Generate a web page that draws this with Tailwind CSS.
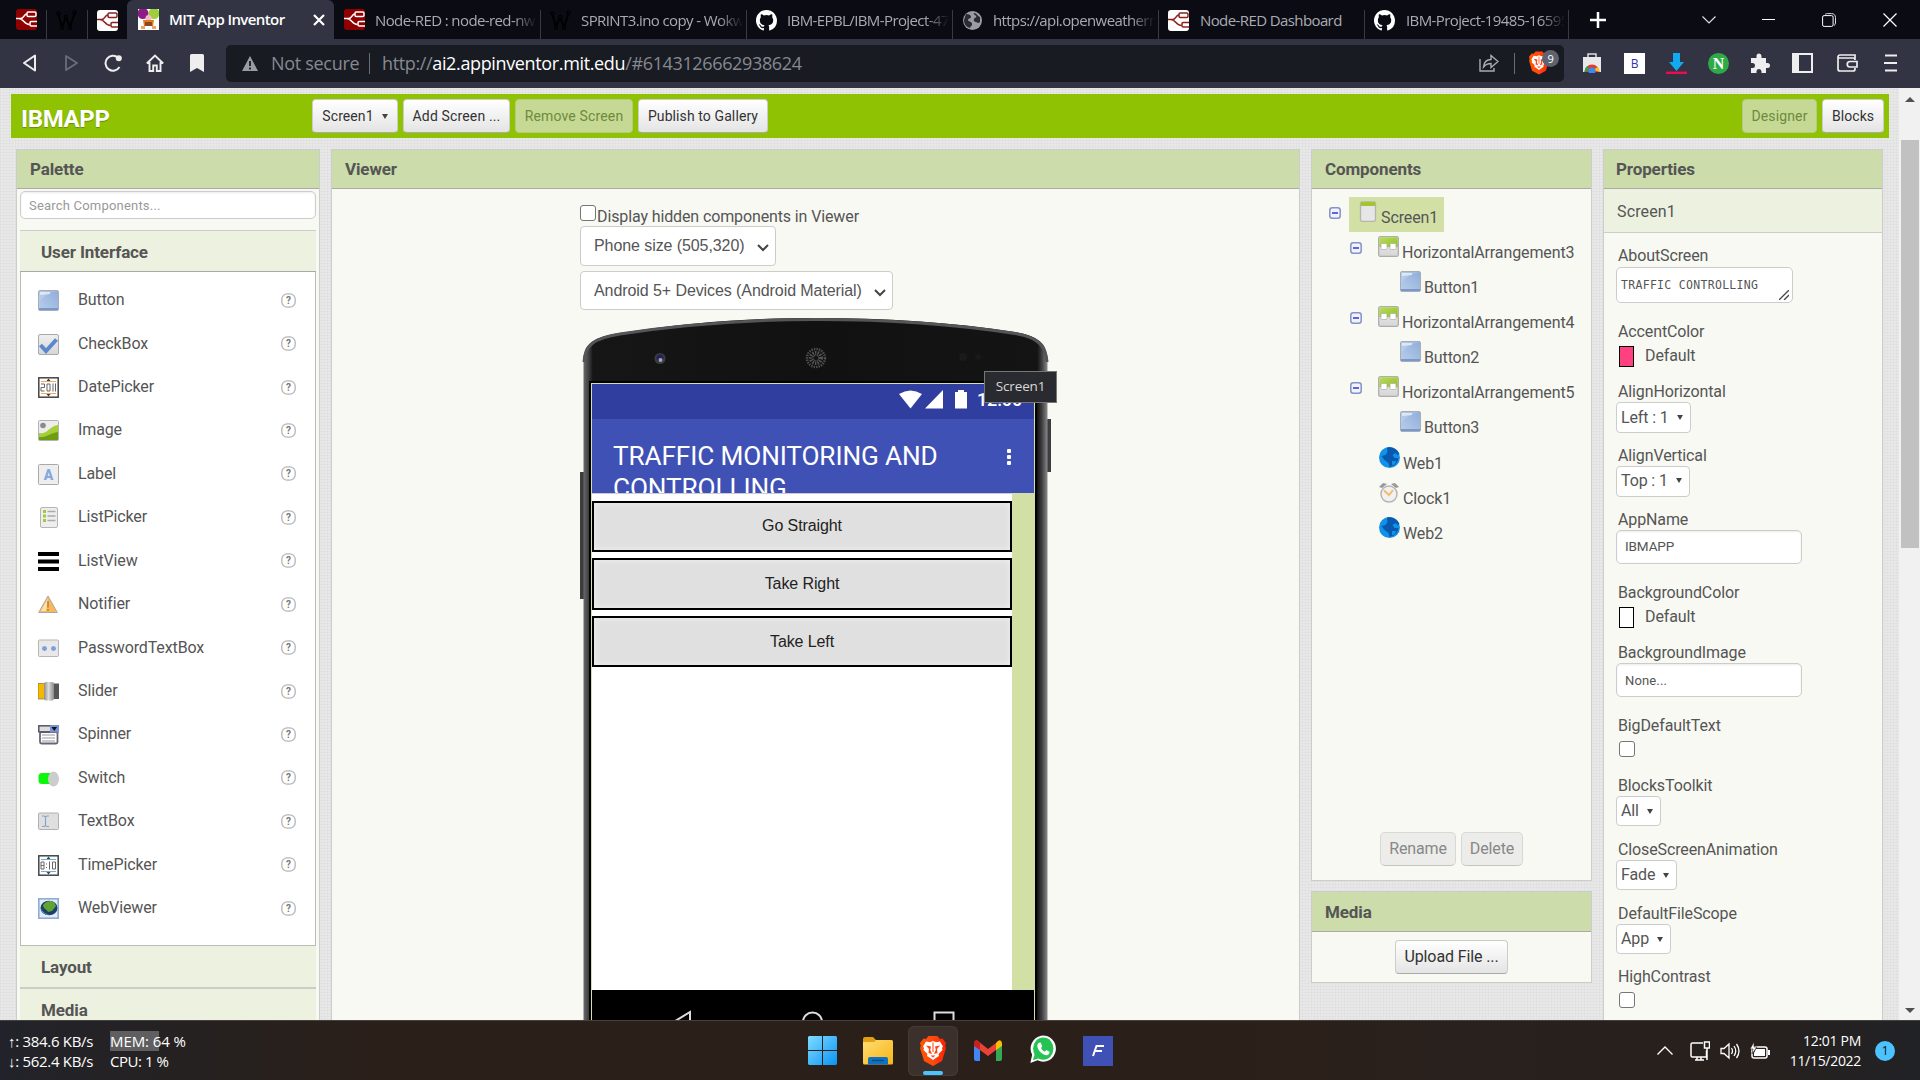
<!DOCTYPE html>
<html lang="en">
<head>
<meta charset="utf-8">
<title>MIT App Inventor</title>
<script src="https://cdn.jsdelivr.net/npm/@tailwindcss/browser@4"></script>
</head>
<body class="w-[1920px] h-[1080px] overflow-hidden flex flex-col font-['Roboto',sans-serif] text-base leading-none tracking-[-0.12px] text-[#555] bg-[#e7e7e7]">

<svg width="0" height="0" class="absolute">
  <defs>
    <linearGradient id="gBlue" x1="0" y1="1" x2="1" y2="0"><stop offset="0" stop-color="#b9cfec"/><stop offset="1" stop-color="#8fadd9"/></linearGradient>
    <linearGradient id="gGrey" x1="0" y1="0" x2="0" y2="1"><stop offset="0" stop-color="#efefef"/><stop offset="1" stop-color="#d6d6d6"/></linearGradient>
    <linearGradient id="gGreen" x1="0" y1="0" x2="1" y2="1"><stop offset="0" stop-color="#b6dd5a"/><stop offset="1" stop-color="#97bf25"/></linearGradient>
    <linearGradient id="gWin" x1="0" y1="0" x2="1" y2="1"><stop offset="0" stop-color="#7fdcff"/><stop offset="1" stop-color="#0a93f5"/></linearGradient>
    <linearGradient id="gFold" x1="0" y1="0" x2="1" y2="1"><stop offset="0" stop-color="#ffdc73"/><stop offset="1" stop-color="#f8b516"/></linearGradient>
    <linearGradient id="gBrave" x1="0" y1="0" x2="1" y2="0"><stop offset="0" stop-color="#ff5500"/><stop offset=".5" stop-color="#ff4a10"/><stop offset="1" stop-color="#ff2000"/></linearGradient>
    <linearGradient id="gSlide" x1="0" y1="0" x2="1" y2="0"><stop offset="0" stop-color="#8d8d8d"/><stop offset=".45" stop-color="#dcdcdc"/><stop offset="1" stop-color="#8a8a8a"/></linearGradient>
    <linearGradient id="gPhone" x1="0" y1="0" x2="1" y2="0"><stop offset="0" stop-color="#6a6a6b"/><stop offset=".012" stop-color="#3c3c3e"/><stop offset=".02" stop-color="#161616"/><stop offset=".5" stop-color="#111"/><stop offset=".978" stop-color="#141414"/><stop offset=".988" stop-color="#3f3f42"/><stop offset="1" stop-color="#8a8a8c"/></linearGradient>
    <symbol id="nodes" viewBox="0 0 21 21"><path d="M0 9.500h4.500c4 0 3-4.500 6.500-4.500M3 9.500c5 0 4.500 6 10.500 6" fill="none" stroke="currentColor" stroke-width="1.500"/><rect x="11" y="3" width="9" height="4.500" rx="1.200" fill="none" stroke="currentColor" stroke-width="1.500"/><rect x="14" y="12.500" width="8" height="4.500" rx="1.200" fill="none" stroke="currentColor" stroke-width="1.500"/></symbol>
    <symbol id="wok" viewBox="0 0 21 21"><path d="M2 3l4 14 4-10 4 10 5-15" fill="none" stroke="#000" stroke-width="2"/><g fill="#0b0b14" stroke="#000" stroke-width="1.200"><circle cx="2.500" cy="3.500" r="1.600"/><circle cx="6" cy="17.500" r="1.600"/><circle cx="10" cy="7" r="1.600"/><circle cx="14" cy="17.500" r="1.600"/><circle cx="18.500" cy="2.500" r="1.600"/></g></symbol>
    <symbol id="github" viewBox="0 0 16 16"><path fill="#fff" d="M8 0C3.580 0 0 3.580 0 8c0 3.540 2.290 6.530 5.470 7.590.4.070.55-.17.55-.38 0-.19-.01-.82-.01-1.490-2.010.37-2.530-.49-2.690-.94-.09-.23-.48-.94-.82-1.130-.28-.15-.68-.52-.01-.53.63-.01 1.080.58 1.230.82.72 1.210 1.870.87 2.330.66.070-.52.28-.87.51-1.070-1.780-.2-3.640-.89-3.640-3.950 0-.87.31-1.590.82-2.150-.08-.2-.36-1.020.08-2.120 0 0 .67-.21 2.200.82a7.600 7.600 0 0 1 4 0c1.530-1.040 2.200-.82 2.200-.82.44 1.100.16 1.920.08 2.120.51.56.82 1.270.82 2.150 0 3.070-1.870 3.750-3.650 3.950.29.25.54.73.54 1.480 0 1.070-.01 1.930-.01 2.200 0 .21.15.46.55.38A8 8 0 0 0 16 8c0-4.420-3.580-8-8-8z"/></symbol>
    <symbol id="brave" viewBox="0 0 26 30"><path fill="url(#gBrave)" d="M6 3l2.500-3h9L20 3l2.500-.5L26 7l-.8 3L26 12l-4 13-9 5-9-5L0 12l.8-2L0 7l3.500-4.500z"/><path fill="#fff" d="M6 5.500l4 .8L13 5l3 1.300 4-.8 3 5-1 1.500.5 2-4 4 .5 2-2.500 1.500L13 24l-3.500-2.500L7 20l.5-2-4-4 .5-2-1-1.500z"/><path fill="#ff4210" d="M6 9.500l5 1-.8 3.500L12 18l-3.500-1L9 13zM20 9.500l-5 1 .8 3.500L14 18l3.500-1L17 13zM10.500 19.500h5L13 21.500zM12.500 6.500h1V16h-1z"/></symbol>
    <symbol id="help" viewBox="0 0 15 15"><rect x=".8" y=".8" width="13.400" height="13.400" rx="5.500" fill="#fff" stroke="#b5b5b5" stroke-width="1.300"/><text x="7.500" y="11" text-anchor="middle" font-family="Roboto" font-weight="700" font-size="10" fill="#777">?</text></symbol>
    <symbol id="minus" viewBox="0 0 12 12"><rect x=".8" y=".8" width="10.400" height="10.400" rx="2.500" fill="#f0f2ff" stroke="#8593c4" stroke-width="1.500"/><path d="M3 6h6" stroke="#33c" stroke-width="1.500"/></symbol>
    <symbol id="i-button" viewBox="0 0 21 21"><rect x=".5" y=".5" width="20" height="20" rx="1.500" fill="url(#gBlue)" stroke="#a9adb5"/><path d="M2 5V2h10v2z" fill="#fff" opacity=".6"/><path d="M1 12C8 4 14 2 20 1H1z" fill="#fff" opacity=".15"/><path d="M1 18h19v2H1z" fill="#7997cd"/></symbol>
    <symbol id="i-check" viewBox="0 0 21 21"><rect x=".5" y=".5" width="20" height="20" rx="1.500" fill="url(#gGrey)" stroke="#aaa"/><path d="M2.500 11l5.500 6L18.500 5.500" fill="none" stroke="#5d87cc" stroke-width="4"/></symbol>
    <symbol id="i-date" viewBox="0 0 21 21"><rect x=".8" y=".8" width="19.400" height="19.400" fill="#fff" stroke="#444" stroke-width="1.500"/><path d="M3 4.500h15M3 16.500h15" stroke="#f5a95a"/><path d="M8.500 4L10.500 1.500 12.500 4zM8.500 17l2 2.500 2-2.500z" fill="#533"/><path d="M3 7h3.500v3.500H3V14h3.500M9 7h3v7H9zM15 6.500v8M17.500 6.500v8" fill="none" stroke="#666"/></symbol>
    <symbol id="i-image" viewBox="0 0 21 21"><rect x=".5" y=".5" width="20" height="20" rx="1" fill="#ececec" stroke="#b3b3b3"/><circle cx="5" cy="5.500" r="2.800" fill="#8a8a8a"/><path d="M1 13c8 2 9-6 19-8v15H1z" fill="#a6ce39"/><path d="M1 17c7 1 11-4 19-5v8H1z" fill="#6c9d12"/></symbol>
    <symbol id="i-label" viewBox="0 0 21 21"><rect x=".5" y=".5" width="20" height="20" rx="1" fill="#eee" stroke="#aaa"/><text x="10.500" y="15.500" text-anchor="middle" font-family="Roboto" font-size="14" font-weight="900" fill="#86a8de">A</text></symbol>
    <symbol id="i-list" viewBox="0 0 21 21"><rect x="2.500" y=".5" width="17" height="20" rx="1.500" fill="#eee" stroke="#b5b5b5"/><path d="M5 4.500h3M5 9h3M5 13.500h3" stroke="#9fcb3b" stroke-width="3"/><path d="M9.500 4.500h8M9.500 9h8M9.500 13.500h8" stroke="#aaa" stroke-width="1.300"/></symbol>
    <symbol id="i-lview" viewBox="0 0 21 21"><path d="M0 3h21M0 10.500h21M0 18h21" stroke="#000" stroke-width="4"/></symbol>
    <symbol id="i-notify" viewBox="0 0 21 21"><path d="M10 2l9.300 16.500H.7z" fill="#fbb856" stroke="#a8a8a8"/><path d="M10 4L3 17h5z" fill="#fde2b0"/><path d="M10 7v6.500M10 15v2" stroke="#a8844a" stroke-width="1.500"/></symbol>
    <symbol id="i-pass" viewBox="0 0 21 21"><rect x=".5" y="2" width="20" height="16.500" rx="1" fill="#e8e8e8" stroke="#b5b5b5"/><g stroke="#7ba0dc" stroke-width="1.300"><path d="M4 10.500h5M6.500 8v5M4.700 8.700l3.600 3.600M8.300 8.700l-3.600 3.600M13 10.500h5M15.500 8v5M13.700 8.700l3.600 3.600M17.300 8.700l-3.600 3.600"/></g></symbol>
    <symbol id="i-slider" viewBox="0 0 21 21"><rect y="2.500" width="7" height="15.500" fill="#f5b800" stroke="#7b6a2a" stroke-width=".6"/><rect x="15" y="2.500" width="6" height="15.500" fill="#555"/><rect x="6" y="1" width="10" height="18.500" rx="2" fill="url(#gSlide)"/></symbol>
    <symbol id="i-spin" viewBox="0 0 21 21"><rect x="2" y="8" width="17.500" height="11.500" rx="1.500" fill="#fff" stroke="#667" stroke-width="1.800"/><rect x=".8" y="1.800" width="19.400" height="6" fill="#ddd" stroke="#556" stroke-width="1.500"/><rect x="12" y="1" width="9" height="7.500" fill="#7b90d0"/><path d="M13.500 3h5.500l-2.700 4z" fill="#111"/><path d="M4 11h13M4 14h13M4 17h13" stroke="#999"/></symbol>
    <symbol id="i-switch" viewBox="0 0 21 21"><rect x=".5" y="5" width="17" height="11" rx="3.500" fill="#0cf60c"/><ellipse cx="15.500" cy="11" rx="5.500" ry="7.500" fill="#ccc"/></symbol>
    <symbol id="i-text" viewBox="0 0 21 21"><rect x=".5" y="2" width="20" height="16.500" rx="1" fill="#dfdfdf" stroke="#b0b0b0"/><path d="M4 5h2l1.500.8L9 5h2M4 15.500h2l1.500-.8 1.500.8h2M7.500 5.500v9.500" fill="none" stroke="#87a3cd" stroke-width="1.200"/></symbol>
    <symbol id="i-time" viewBox="0 0 21 21"><rect x=".8" y=".8" width="19.400" height="19.400" fill="#fff" stroke="#444" stroke-width="1.500"/><path d="M3 4.500h15M3 16.500h15" stroke="#6ab0dc"/><path d="M8.500 4l2-2.500 2 2.500zM8.500 17l2 2.500 2-2.500z" fill="#444"/><path d="M3 7h3v7H3zM3 10.500h3M11.500 6.500v8M14.500 7h3v7h-3zM8.500 8.500v1M8.500 12v1" fill="none" stroke="#666"/></symbol>
    <symbol id="i-webv" viewBox="0 0 21 21"><rect x=".8" y=".8" width="19.400" height="19.400" fill="#e5ecf7" stroke="#8cacd9" stroke-width="1.600"/><ellipse cx="11" cy="10" rx="8.500" ry="7.300" fill="#1d3f63"/><path d="M5 7c3-4 8-5 11-3l2 4-4 5-4 1c-1-3-5-3-5-7z" fill="#5fa336"/><path d="M3 10c1 4 5 6 9 7-5 0-9-3-9-7z" fill="#6db7e8"/></symbol>
    <symbol id="i-screen" viewBox="0 0 21 21"><rect x="3.500" y=".8" width="15" height="19.500" rx="1.500" fill="#e6e6e6" stroke="#b5b5a9" stroke-width="1.300"/><path d="M4 1h14v4H4z" fill="#a2c62e"/></symbol>
    <symbol id="i-horiz" viewBox="0 0 21 21"><rect x=".7" y=".7" width="19.600" height="19.600" rx="1.500" fill="url(#gGrey)" stroke="#adadad" stroke-width="1.300"/><path d="M1.300 1.300h18.400V11H1.300z" fill="url(#gGreen)"/><rect x="3" y="7.500" width="6" height="6" rx="1" fill="#fff" stroke="#aaa" stroke-width=".7"/><rect x="12" y="7.500" width="6" height="6" rx="1" fill="#fff" stroke="#aaa" stroke-width=".7"/></symbol>
    <symbol id="i-web" viewBox="0 0 21 21"><circle cx="10.500" cy="10.500" r="10.500" fill="#0f93ea"/><path d="M8 .5C13-.5 18 2 20.500 7l-2 1-2-2-3 2 2 3 4 0c-1 5-4 8-9 9l-1-4-4-3-3-4 4-1 2-3z" fill="#0a57ae"/><path d="M13 14l4 0-1 3-3 1.500z" fill="#0f93ea"/></symbol>
    <symbol id="i-clock" viewBox="0 0 21 21"><path d="M0 5l4-4 4 1-5 4zM20 5l-4-4-4 1 5 4z" fill="#999"/><circle cx="10" cy="12" r="8" fill="#f1f1f1" stroke="#b5b5b5" stroke-width="1.500"/><path d="M5 8.500l5 4.500 4-5" fill="none" stroke="#f4bb6c" stroke-width="2"/></symbol>
  </defs>
</svg>

<!-- browser tabs -->
<div class="h-[39px] shrink-0 flex items-center bg-[#0b0b14] font-['Open_Sans',sans-serif] text-[15px] tracking-[-0.6px] text-[#a9abb1]">
  <div class="w-[46px] h-full flex items-center pl-4"><svg class="size-[21px] rounded-[3px] bg-[#8f0000] text-white"><use href="#nodes"/></svg></div>
  <div class="w-[41px] h-[29px] mt-2.5 flex items-start border-l border-[#3a3b40] pl-[9px]"><svg class="size-[21px]"><use href="#wok"/></svg></div>
  <div class="w-[40px] h-[29px] mt-2.5 flex items-start border-l border-[#3a3b40] pl-[9px]"><svg class="size-[21px] rounded-[3px] bg-white text-[#8f2020]"><use href="#nodes"/></svg></div>
  <div class="w-[207px] h-full flex items-center bg-[#323443] rounded-t-md pl-[11px] text-white font-semibold">
    <svg class="size-[21px] shrink-0" viewBox="0 0 21 21"><rect width="21" height="21" fill="#fff"/><circle cx="5" cy="4.500" r="5.500" fill="#8e1b86"/><circle cx="16" cy="4.500" r="5.500" fill="#9bd03a"/><circle cx="10.500" cy="9" r="3" fill="#f3b9c5"/><path d="M5 11h11l-1 6H6z" fill="#e87722"/><path d="M7 13h7v4H7z" fill="#8a4b1c"/><path d="M3 17h4v3H3zM14 17h4v3h-4z" fill="#f5a35a"/></svg>
    <span class="ml-2.5 w-[144px] whitespace-nowrap tracking-[-0.6px]">MIT App Inventor</span>
    <svg class="size-3" viewBox="0 0 12 12"><path d="M1 1l10 10M11 1L1 11" stroke="#fff" stroke-width="2.200"/></svg>
  </div>
  <div class="w-[206px] h-full flex items-center pl-2.5"><svg class="size-[21px] shrink-0 rounded-[3px] bg-[#8f0000] text-white"><use href="#nodes"/></svg><span class="ml-2.5 w-[162px] overflow-hidden whitespace-nowrap leading-6 [mask-image:linear-gradient(90deg,#000_85%,transparent)]">Node-RED : node-red-nwxyz</span></div>
  <div class="w-[206px] h-[29px] mt-2.5 flex items-start border-l border-[#3a3b40] pl-[9px]"><svg class="size-[21px] shrink-0"><use href="#wok"/></svg><span class="ml-2.5 -mt-0.5 w-[162px] overflow-hidden whitespace-nowrap leading-6 [mask-image:linear-gradient(90deg,#000_85%,transparent)]">SPRINT3.ino copy - Wokwi Ar</span></div>
  <div class="w-[206px] h-[29px] mt-2.5 flex items-start border-l border-[#3a3b40] pl-[9px]"><svg class="size-[21px] shrink-0"><use href="#github"/></svg><span class="ml-2.5 -mt-0.5 w-[162px] overflow-hidden whitespace-nowrap leading-6 [mask-image:linear-gradient(90deg,#000_85%,transparent)]">IBM-EPBL/IBM-Project-4785</span></div>
  <div class="w-[206px] h-[29px] mt-2.5 flex items-start border-l border-[#3a3b40] pl-[9px]"><svg class="size-[21px] shrink-0" viewBox="0 0 21 21"><circle cx="10.500" cy="10.500" r="9.500" fill="#9a9ca3"/><path d="M4 4c3 0 5 1 5 3s-3 1-3 3 4 1 4 4-2 2-2 4c-4-1-6-4-6-8zM12 3c3 0 3 3 6 4v5c-2 2-3 0-4 0s-3-1-2-3 3-1 2-3-3-1-2-3z" fill="#2a2b33"/></svg><span class="ml-2.5 -mt-0.5 w-[162px] overflow-hidden whitespace-nowrap leading-6 [mask-image:linear-gradient(90deg,#000_85%,transparent)]">https://api.openweathermap</span></div>
  <div class="w-[206px] h-[29px] mt-2.5 flex items-start border-l border-[#3a3b40] pl-[9px]"><svg class="size-[21px] shrink-0 rounded-[3px] bg-white text-[#8f2020]"><use href="#nodes"/></svg><span class="ml-[11px] -mt-0.5 whitespace-nowrap leading-6">Node-RED Dashboard</span></div>
  <div class="w-[205px] h-[29px] mt-2.5 flex items-start border-x border-[#3a3b40] pl-[9px]"><svg class="size-[21px] shrink-0"><use href="#github"/></svg><span class="ml-[11px] -mt-0.5 w-[159px] overflow-hidden whitespace-nowrap leading-6 [mask-image:linear-gradient(90deg,#000_85%,transparent)]">IBM-Project-19485-165958</span></div>
  <svg class="ml-[21px] size-4" viewBox="0 0 16 16"><path d="M8 0v16M0 8h16" stroke="#fff" stroke-width="2.500"/></svg>
  <svg class="ml-[96px] w-[14px] h-2" viewBox="0 0 14 8"><path d="M.5 .5L7 7 13.500 .5" fill="none" stroke="#ddd" stroke-width="1.200"/></svg>
  <div class="ml-[46px] w-[13px] h-px bg-white"></div>
  <svg class="ml-[47px] size-[14px]" viewBox="0 0 14 14"><path d="M3 1.500C4 .6 5 .6 6 .6h3.500c2.500 0 4 1.500 4 4V10c0 1-.5 2-1.500 2.500" fill="none" stroke="#ddd"/><rect x=".6" y="2.600" width="10.500" height="10.800" rx="1.500" fill="none" stroke="#fff"/></svg>
  <svg class="ml-[47px] size-[14px]" viewBox="0 0 14 14"><path d="M.5 .5l13 13M13.500 .5l-13 13" stroke="#fff" stroke-width="1.200"/></svg>
</div>

<!-- address bar -->
<div class="h-[49px] shrink-0 flex items-center bg-[#323443] pb-[1px]">
  <svg class="ml-[22px] w-[15px] h-[18px]" viewBox="0 0 15 18"><path d="M13 1.500v15L2 9z" fill="none" stroke="#eee" stroke-width="2" stroke-linejoin="round"/></svg>
  <svg class="ml-[27px] w-[15px] h-[18px]" viewBox="0 0 15 18"><path d="M2 2v14l11-7z" fill="none" stroke="#6b6d79" stroke-width="1.800" stroke-linejoin="round"/></svg>
  <svg class="ml-[25px] size-[18px]" viewBox="0 0 18 18"><path d="M15.500 13A7.500 7.500 0 1 1 14 3.500" fill="none" stroke="#eee" stroke-width="2"/><circle cx="14.800" cy="4.200" r="3" fill="#eee"/></svg>
  <svg class="ml-[24px] size-[18px]" viewBox="0 0 18 18"><path d="M.8 9.500L9 1.500l8.200 8M3.500 8v9h3.700v-5.500h3.600V17h3.700V8" fill="none" stroke="#eee" stroke-width="1.900"/></svg>
  <svg class="ml-[26px] w-[14px] h-[18px]" viewBox="0 0 14 18"><path d="M0 1.500Q0 0 1.500 0h11Q14 0 14 1.500V18l-7-4-7 4z" fill="#eee"/></svg>
  <div class="ml-[22px] w-[1338px] h-[37px] rounded-[5px] bg-[#181b22] flex items-center font-['Open_Sans',sans-serif] text-[18px] text-[#868990]">
    <svg class="ml-4 w-4 h-[15px]" viewBox="0 0 16 15"><path d="M8 0l8 15H0z" fill="#9a9ca3"/><path d="M8 5v5M8 11.500v2" stroke="#181b22" stroke-width="1.800"/></svg>
    <span class="ml-[13px] w-[98px] whitespace-nowrap tracking-[-0.3px]">Not secure</span>
    <span class="h-[21px] w-px bg-[#6a6c74]"></span>
    <span class="ml-3 whitespace-nowrap tracking-[-0.36px]">http://<span class="text-white">ai2.appinventor.mit.edu</span>/#6143126662938624</span>
    <svg class="ml-auto w-5 h-[18px]" viewBox="0 0 20 18"><path d="M1 5v12h14v-3M4.500 13C5 8 8 5.500 12 5.500V1.500l7 6-7 6V9.500C9 9.500 6.500 10.500 4.500 13z" fill="none" stroke="#aaacb3" stroke-width="1.400"/></svg>
    <span class="ml-[15px] h-[21px] w-px bg-[#6a6c74]"></span>
    <div class="relative ml-[14px] mr-[15px] w-5 h-6"><svg class="w-5 h-6"><use href="#brave"/></svg><span class="absolute left-[13px] -top-[1px] size-[17px] rounded-full bg-[#5f6370] text-white text-[11px] leading-[17px] text-center">9</span></div>
  </div>
  <svg class="ml-[18px] w-5 h-[20px]" viewBox="0 0 20 20"><path d="M6 5V1h8v4" fill="none" stroke="#ddd" stroke-width="1.500"/><path d="M1 4h18v15H1z" fill="#e8e8e8"/><path d="M2.500 19a7.500 7.500 0 0 1 15 0" fill="#e33b2e"/><path d="M2.500 19a7.500 7.500 0 0 1 3-6l3 4.500z" fill="#2f9e4f"/><path d="M17.500 19a7.500 7.500 0 0 0-2-5l-4 3z" fill="#f9c515"/><circle cx="10" cy="18" r="3.500" fill="#3f87f5"/></svg>
  <div class="ml-[22px] w-[21px] h-[21px] bg-white text-[#3730b0] font-['Open_Sans',sans-serif] text-[12px] leading-[21px] text-center">B</div>
  <svg class="ml-[21px] size-[21px]" viewBox="0 0 21 21"><path d="M7 0h7v9h4l-7.500 9L3 9h4z" fill="#12a9f0"/><path d="M0 19.800h21" stroke="#f00a50" stroke-width="2.400"/></svg>
  <div class="ml-[21px] size-[21px] rounded-full bg-[#2eab47] text-white font-['Liberation_Serif',serif] font-bold text-[16px] leading-[21px] text-center">N</div>
  <svg class="ml-[21px] size-[20px]" viewBox="0 0 20 20"><path d="M1 5h5.500V3a2.500 2.500 0 0 1 5 0v2H16v5h1.500a2.500 2.500 0 0 1 0 5H16v5h-4.500v-1.500a2.500 2.500 0 0 0-5 0V20H1v-5h1.500a2.500 2.500 0 0 0 0-5H1z" fill="#eee"/></svg>
  <svg class="ml-[22px] w-[21px] h-[20px]" viewBox="0 0 21 20"><rect x="1" y="1" width="19" height="18" fill="none" stroke="#eee" stroke-width="2"/><path d="M1 1h6v18H1z" fill="#eee"/></svg>
  <svg class="ml-[24px] w-[21px] h-[18px]" viewBox="0 0 21 18"><path d="M18 5V1H3a2 2 0 0 0-2 2v12a2 2 0 0 0 2 2h13a2 2 0 0 0 2-2v-1M1 4h15a2 2 0 0 1 2 2" fill="none" stroke="#eee" stroke-width="1.700"/><path d="M20 7.500h-7a2.700 2.700 0 0 0 0 5.500h7z" fill="none" stroke="#eee" stroke-width="1.700"/></svg>
  <svg class="ml-[26px] w-[13px] h-[18px]" viewBox="0 0 13 18"><path d="M1 1.500h12M0 9h13M1 16.500h12" stroke="#eee" stroke-width="1.800"/></svg>
</div>

<!-- page -->
<div class="h-[932px] shrink-0 flex overflow-hidden bg-[#e8e8e8] bg-[repeating-linear-gradient(90deg,rgba(0,0,0,0.025)_0_1px,transparent_1px_3px),repeating-linear-gradient(0deg,rgba(0,0,0,0.025)_0_1px,transparent_1px_3px)]">
  <div class="w-[1899px] flex flex-col">
    <!-- project toolbar -->
    <div class="mt-[6px] ml-[11px] w-[1878px] h-[44px] shrink-0 bg-[#8fc202] flex items-start pt-[5px] text-[14px] tracking-[0.08px] text-[#333]">
      <div class="w-[301px] pl-2.5 pt-2 text-[24px] leading-[24px] font-bold text-white tracking-[-0.35px] [text-shadow:0_1px_1px_#678c01]">IBMAPP</div>
      <div class="w-[86px] h-[34px] rounded border border-[#ccc] border-b-[#aaa] bg-linear-to-b from-white to-[#e4e4e4] flex items-center justify-center">Screen1<span class="ml-2 border-x-[3px] border-x-transparent border-t-[5px] border-t-[#444]"></span></div>
      <div class="ml-[5px] w-[107px] h-[34px] rounded border border-[#ccc] border-b-[#aaa] bg-linear-to-b from-white to-[#e4e4e4] flex items-center justify-center tracking-[0.15px]">Add Screen ...</div>
      <div class="ml-[5px] w-[118px] h-[34px] rounded border border-[#b6c988] bg-[#c5d995] text-[#6e8a3a] flex items-center justify-center tracking-[0.15px]">Remove Screen</div>
      <div class="ml-[5px] w-[130px] h-[34px] rounded border border-[#ccc] border-b-[#aaa] bg-linear-to-b from-white to-[#e4e4e4] flex items-center justify-center whitespace-nowrap tracking-[0.1px]">Publish to Gallery</div>
      <div class="ml-auto w-[75px] h-[34px] rounded border border-[#b6c988] bg-[#c5d995] text-[#6e8a3a] flex items-center justify-center tracking-[0.15px]">Designer</div>
      <div class="ml-[5px] mr-[5px] w-[62px] h-[34px] rounded border border-[#ccc] border-b-[#aaa] bg-linear-to-b from-white to-[#e4e4e4] flex items-center justify-center">Blocks</div>
    </div>

    <div class="mt-[11px] ml-4 flex items-start">
      <!-- palette -->
      <div class="w-[304px] h-[900px] border border-[#ccc] bg-[#f8f9f3]">
        <div class="h-[39px] bg-[#ccdcaa] border-b border-[#aaa] pl-[13px] pt-px flex items-center font-bold text-[17px]">Palette</div>
        <div class="mt-[2px] mx-[3px] h-[28px] w-[296px] border border-[#ccc] rounded-[5px] bg-white pl-2 flex items-center text-[13px] text-[#999] tracking-[0.2px] shadow-[inset_0_1px_2px_rgba(0,0,0,0.08)]">Search Components...</div>
        <div class="mt-[11px] ml-[3px] w-[296px] h-[42px] bg-[#edf1e0] border-t border-t-[#ccc] border-b border-b-[#aaa] pl-[21px] pt-[3px] flex items-center font-bold text-[17px]">User Interface</div>
        <div id="palette" class="ml-[3px] w-[296px] h-[674px] bg-white border border-t-0 border-[#bbb] pt-[7px]"></div>
        <div class="ml-[3px] w-[296px] h-[43px] bg-[#edf1e0] border-b-2 border-b-[#ccc] pl-[21px] pt-[2px] flex items-center font-bold text-[17px]">Layout</div>
        <div class="ml-[3px] w-[296px] h-[43px] bg-[#edf1e0] pl-[21px] flex items-center font-bold text-[17px]">Media</div>
      </div>

      <!-- viewer -->
      <div class="ml-[11px] w-[969px] h-[900px] border border-[#ccc] bg-[#f8f9f3]">
        <div class="h-[39px] bg-[#ccdcaa] border-b border-[#aaa] pl-[13px] pt-px flex items-center font-bold text-[17px]">Viewer</div>
        <div class="ml-[248px] flex flex-col items-start">
          <div class="mt-[16px] h-[21px] flex"><span class="size-4 rounded-[3px] border border-[#767676] bg-white"></span><span class="ml-[1px] mt-[4px] whitespace-nowrap">Display hidden components in Viewer</span></div>
          <div class="w-[196px] h-[40px] rounded border border-[#ccc] bg-white flex items-center pl-[13px] font-['Liberation_Sans',sans-serif] text-[16px] tracking-[-0.08px] pb-px">Phone size (505,320)<svg class="ml-auto mr-[6px] mt-1 w-3 h-2" viewBox="0 0 12 8"><path d="M1 1l5 5 5-5" fill="none" stroke="#444" stroke-width="2"/></svg></div>
          <div class="mt-[5px] w-[313px] h-[39px] rounded border border-[#ccc] bg-white flex items-center pl-[13px] font-['Liberation_Sans',sans-serif] text-[16px] tracking-[-0.08px]">Android 5+ Devices (Android Material)<svg class="ml-auto mr-[6px] mt-1 w-3 h-2" viewBox="0 0 12 8"><path d="M1 1l5 5 5-5" fill="none" stroke="#444" stroke-width="2"/></svg></div>
          <!-- phone -->
          <div class="relative mt-[7px] w-[472px] h-[710px]">
            <svg class="absolute inset-0" width="472" height="710" viewBox="0 0 472 710">
              <path d="M0 155h4v127H0zM467 102h4v53h-4z" fill="#3d3d40"/>
              <path d="M3.500 710V42C3.500 28 12 20 40 16C110 5 170 1 237 1S370 5 435 15C460 19 467.500 28 467.500 42V710z" fill="url(#gPhone)"/>
              <path d="M4 45C5 28 14 21 40 17C110 6.500 170 2.500 237 2.500S370 6.500 435 16.500C458 20 466 29 467 45" fill="none" stroke="#555558" stroke-width="3"/>
              <circle cx="80" cy="41.500" r="5.500" fill="#3d3d40"/><circle cx="80" cy="41" r="3.500" fill="#23235a"/><circle cx="80.500" cy="43" r="2" fill="#a5a5ac"/>
              <circle cx="236" cy="41" r="9" fill="none" stroke="#4c4c4c" stroke-width="2.500" stroke-dasharray="1.500 1"/><circle cx="236" cy="41" r="4.500" fill="none" stroke="#555" stroke-width="5" stroke-dasharray="1.200 1"/>
              <circle cx="383" cy="40" r="4" fill="#1a1a1a"/><circle cx="398" cy="40" r="3" fill="#191919"/>
              <path d="M9 64h448v646H9z" fill="#000"/>
            </svg>
            <div class="absolute left-[11px] top-[66px] w-[444px] h-[644px] border border-b-0 border-[#d2e0a6] bg-[#d2e0a6] flex flex-col">
              <div class="h-[35px] shrink-0 bg-[#303f9f] flex items-start pl-[306px] pt-[6px] text-white">
                <svg class="w-[25px] h-[19px]" viewBox="0 0 25 19"><path d="M1 4Q12.500-3 24 4L12.500 18.500z" fill="#fff"/></svg>
                <svg class="ml-[2px] w-[18px] h-[19px]" viewBox="0 0 18 19"><path d="M18 0v18.500H0z" fill="#fff"/></svg>
                <svg class="ml-[12px] w-3 h-[19px]" viewBox="0 0 12 19"><path d="M0 2h3V0h6v2h3v16.500H0z" fill="#fff"/></svg>
                <span class="ml-[10px] text-[18px] leading-[19px] font-medium">12:00</span>
              </div>
              <div class="h-[74px] shrink-0 bg-[#3f51b5] overflow-hidden relative pl-[21px] pt-[21px] text-[26.200px] leading-[32px] text-white whitespace-nowrap">TRAFFIC MONITORING AND<br>CONTROLLING<span class="absolute left-[415px] top-[30px] flex flex-col gap-[2px]"><i class="block size-[4px] rounded-[1px] bg-white"></i><i class="block size-[4px] rounded-[1px] bg-white"></i><i class="block size-[4px] rounded-[1px] bg-white"></i></span></div>
              <div class="w-[420px] h-[497px] shrink-0 bg-white border-t border-[#ccc] pt-[7px] font-['Liberation_Sans',sans-serif] text-[16px] tracking-[-0.1px] text-[#222]">
                <div class="h-[51px] border-2 border-black bg-[#e0e0e0] shadow-[inset_0_0_6px_#f0f0f0] flex items-center justify-center pb-0.5">Go Straight</div>
                <div class="mt-[6px] h-[52px] border-2 border-black bg-[#e0e0e0] shadow-[inset_0_0_6px_#f0f0f0] flex items-center justify-center">Take Right</div>
                <div class="mt-[6px] h-[51px] border-2 border-black bg-[#e0e0e0] shadow-[inset_0_0_6px_#f0f0f0] flex items-center justify-center">Take Left</div>
              </div>
              <div class="grow bg-black"><svg width="442" height="37" viewBox="0 0 442 37"><path d="M98 22v28L75 36z" fill="none" stroke="#ddd" stroke-width="2"/><circle cx="220.500" cy="32" r="9.500" fill="none" stroke="#ddd" stroke-width="2"/><rect x="342.500" y="22.500" width="19" height="20" fill="none" stroke="#ddd" stroke-width="2"/></svg></div>
            </div>
            <div class="absolute left-[404px] top-[54px] w-[73px] h-[32px] border border-[#767676] bg-[#2a2b30] text-[#d8d8d8] font-['Open_Sans',sans-serif] text-[13.500px] flex items-center justify-center">Screen1</div>
          </div>
        </div>
      </div>

      <!-- components and media -->
      <div class="ml-[11px] w-[281px]">
        <div class="h-[732px] border border-[#ccc] bg-[#f8f9f3] flex flex-col">
          <div class="h-[39px] shrink-0 bg-[#ccdcaa] border-b border-[#aaa] pl-[13px] pt-px flex items-center font-bold text-[17px]">Components</div>
          <div id="tree" class="mt-[8px]"></div>
          <div class="mt-auto mb-[14px] flex justify-center gap-[5px] text-[#888]">
            <div class="w-[76px] h-[34px] rounded-[5px] border border-[#d8d8d4] border-b-[#c5c5c0] bg-[#ececea] flex items-center justify-center">Rename</div>
            <div class="w-[62px] h-[34px] rounded-[5px] border border-[#d8d8d4] border-b-[#c5c5c0] bg-[#ececea] flex items-center justify-center">Delete</div>
          </div>
        </div>
        <div class="mt-[10px] h-[92px] border border-[#ccc] bg-[#f8f9f3]">
          <div class="h-[40px] bg-[#ccdcaa] border-b border-[#aaa] pl-[13px] pt-[2px] flex items-center font-bold text-[17px]">Media</div>
          <div class="mt-[8px] mx-auto w-[113px] h-[34px] rounded border border-[#ccc] border-b-[#aaa] bg-linear-to-b from-white to-[#e4e4e4] text-[#333] flex items-center justify-center">Upload File ...</div>
        </div>
      </div>

      <!-- properties -->
      <div class="ml-[11px] w-[280px] h-[900px] border border-[#ccc] bg-[#f8f9f3]">
        <div class="h-[39px] bg-[#ccdcaa] border-b border-[#aaa] pl-[12px] pt-px flex items-center font-bold text-[17px]">Properties</div>
        <div class="h-[44px] bg-[#edf1e0] border-b border-[#ccc] pl-[13px] pt-[2px] flex items-center tracking-[0.15px]">Screen1</div>
        <div class="pl-[12px] pt-[12px] flex flex-col items-start">
          <div class="h-[75px]"><div class="h-[22px] pl-[2px] flex items-center">AboutScreen</div><div class="relative w-[177px] h-[36px] border border-[#ccc] rounded-[5px] bg-white pl-1 pt-[2px] flex items-center font-['DejaVu_Sans_Mono',monospace] text-[11.500px] tracking-[0.3px]">TRAFFIC CONTROLLING<svg class="absolute right-[3px] bottom-[2px] size-[10px]" viewBox="0 0 10 10"><path d="M0 10L10 0M5 10l5-5" stroke="#444" stroke-width="1.300"/></svg></div></div>
          <div class="h-[61px] pl-[2px]"><div class="h-[24px] flex items-center">AccentColor</div><div class="h-[24px] flex items-center"><span class="ml-[1px] mr-[11px] w-[15px] h-[21px] border border-black bg-[#ff4081]"></span>Default</div></div>
          <div class="h-[64px]"><div class="h-[21px] pl-[2px] flex items-center">AlignHorizontal</div><div class="w-[75px] h-[31px] border border-[#ccc] rounded bg-white pl-1 flex items-center">Left : 1<span class="ml-auto mr-[7px] border-x-[3px] border-x-transparent border-t-[5px] border-t-[#444]"></span></div></div>
          <div class="h-[64px]"><div class="h-[21px] pl-[2px] flex items-center">AlignVertical</div><div class="w-[74px] h-[31px] border border-[#ccc] rounded bg-white pl-1 pb-[2px] flex items-center">Top : 1<span class="ml-auto mr-[7px] border-x-[3px] border-x-transparent border-t-[5px] border-t-[#444]"></span></div></div>
          <div class="h-[72px]"><div class="h-[21px] pl-[2px] flex items-center">AppName</div><div class="w-[186px] h-[34px] border border-[#ccc] rounded-[5px] bg-white pl-2 flex items-center text-[13.500px] shadow-[inset_0_1px_2px_rgba(0,0,0,0.08)]">IBMAPP</div></div>
          <div class="h-[61px] pl-[2px]"><div class="h-[24px] flex items-center">BackgroundColor</div><div class="h-[24px] flex items-center"><span class="ml-[1px] mr-[11px] w-[15px] h-[21px] border border-black bg-white"></span>Default</div></div>
          <div class="h-[73px]"><div class="h-[21px] pl-[2px] flex items-center">BackgroundImage</div><div class="w-[186px] h-[34px] border border-[#ccc] rounded-[5px] bg-white pl-2 flex items-center text-[13px] tracking-[0.15px] shadow-[inset_0_1px_2px_rgba(0,0,0,0.08)]">None...</div></div>
          <div class="h-[60px] pl-[2px]"><div class="h-[21px] flex items-center">BigDefaultText</div><div class="ml-[1px] mt-[5px] size-4 rounded-[3px] border border-[#767676] bg-white"></div></div>
          <div class="h-[64px]"><div class="h-[21px] pl-[2px] flex items-center">BlocksToolkit</div><div class="w-[45px] h-[30px] border border-[#ccc] rounded bg-white pl-1 flex items-center">All<span class="ml-auto mr-[7px] border-x-[3px] border-x-transparent border-t-[5px] border-t-[#444]"></span></div></div>
          <div class="h-[64px]"><div class="h-[21px] pl-[2px] flex items-center">CloseScreenAnimation</div><div class="w-[61px] h-[30px] border border-[#ccc] rounded bg-white pl-1 flex items-center">Fade<span class="ml-auto mr-[7px] border-x-[3px] border-x-transparent border-t-[5px] border-t-[#444]"></span></div></div>
          <div class="h-[64px]"><div class="h-[21px] pl-[2px] flex items-center">DefaultFileScope</div><div class="w-[55px] h-[30px] border border-[#ccc] rounded bg-white pl-1 flex items-center">App<span class="ml-auto mr-[7px] border-x-[3px] border-x-transparent border-t-[5px] border-t-[#444]"></span></div></div>
          <div class="h-[60px] pl-[2px]"><div class="h-[20px] flex items-center">HighContrast</div><div class="ml-[1px] mt-[5px] size-4 rounded-[3px] border border-[#767676] bg-white"></div></div>
        </div>
      </div>
    </div>
  </div>
  <!-- scrollbar -->
  <div class="w-[21px] bg-[#f1f1f1] flex flex-col items-center">
    <span class="mt-[9px] border-x-[5px] border-x-transparent border-b-[5px] border-b-[#505050]"></span>
    <div class="mt-[38px] w-[18px] h-[408px] bg-[#c1c1c1]"></div>
    <span class="mt-auto mb-[7px] border-x-[5px] border-x-transparent border-t-[5px] border-t-[#505050]"></span>
  </div>
</div>

<!-- taskbar -->
<div class="h-[60px] shrink-0 flex items-center border-t border-[#45413e] bg-[linear-gradient(90deg,#22232a_0%,#26211f_12%,#2b1f19_20%,#2b1f19_60%,#2b201a_68%,#29211d_75%,#28201c_90%,#212226_100%)] text-white font-['Open_Sans',sans-serif] text-[14px] leading-5 tracking-[-0.3px]">
  <div class="w-[102px] pl-2 whitespace-nowrap text-[15px] tracking-[-0.3px]">↑: 384.6 KB/s<br>↓: 562.4 KB/s</div>
  <div class="w-[706px] pl-2 whitespace-nowrap text-[15px] tracking-[-0.1px]"><span class="bg-[linear-gradient(90deg,#5f5f61_64%,transparent_64%)]">MEM: 64 %</span><br><span class="tracking-[-0.45px]">CPU: 1 %</span></div>
  <svg class="w-[29px] h-[29px]" viewBox="0 0 29 29"><path d="M1 0h13v14H0V1zM15 0h13l1 1v13H15zM0 15h14v14H1l-1-1zM15 15h14v13l-1 1H15z" fill="url(#gWin)"/></svg>
  <svg class="ml-[26px] w-[30px] h-[28px]" viewBox="0 0 30 28"><path d="M0 2Q0 0 2 0h8l3 3h15v5H0z" fill="#e0a00f"/><path d="M0 5h11l2-2h15.500Q30 3 30 4.500V26Q30 27.500 28.500 27.500H1.500Q0 27.500 0 26z" fill="url(#gFold)"/><path d="M5 27.500V22q0-2 2-2h16q2 0 2 2v5.500z" fill="#1271c0"/><path d="M9 23.500h12" stroke="#0c4b8c" stroke-width="1.500"/></svg>
  <div class="ml-[15px] w-[50px] h-[50px] rounded-md border border-white/5 bg-white/8 flex flex-col items-center pt-[9px]"><svg class="w-[26px] h-[30px]"><use href="#brave"/></svg><span class="mt-[5px] w-5 h-1 rounded-full bg-[#4cc2ff]"></span></div>
  <svg class="ml-4 w-7 h-[21px]" viewBox="0 0 28 21"><path d="M0 4v15q0 2 2 2h4V8z" fill="#4285f4"/><path d="M28 4v15q0 2-2 2h-4V8z" fill="#34a853"/><path d="M22 3v7l6-4V3q-1-4-4-2z" fill="#fbbc04"/><path d="M0 6V3q1-4 4-2l10 8 8-6v7l-8 6-8-6z" fill="#ea4335"/><path d="M0 6V3q1-4 4-2l2 2v7z" fill="#c5221f"/></svg>
  <svg class="ml-[27px] w-[28px] h-[28px] mb-1" viewBox="0 0 28 31"><path d="M0 31l2-9A14 14.500 0 1 1 8 28z" fill="#fff"/><ellipse cx="14.300" cy="15" rx="11.300" ry="12.300" fill="#25c353"/><path d="M2.800 28l2-7 4 5z" fill="#25c353"/><path d="M9.500 8.500l2-.3 1.700 4.500-1.400 1.800c1 2 2.200 3.200 4.200 4l1.600-2 3.600 2c.3 2.200-1.500 4-3.700 3.800-5-.7-9.500-5.400-9.800-10 0-1.800.7-3 1.800-3.800z" fill="#fff"/></svg>
  <div class="ml-[26px] size-[30px] bg-[#3f51b5] flex items-center justify-center"><svg class="w-3 h-3" viewBox="0 0 12 12"><path d="M12 1H4.500L1 11M10 6H2.500" fill="none" stroke="#fff" stroke-width="2"/></svg></div>
  <svg class="ml-[544px] w-4 h-[9px]" viewBox="0 0 16 9"><path d="M.5 8.500L8 1l7.500 7.500" fill="none" stroke="#fff" stroke-width="1.300"/></svg>
  <svg class="ml-[17px] w-5 h-[20px]" viewBox="0 0 20 20"><path d="M13 2H2.500Q1 2 1 3.500v11Q1 16 2.500 16h14V9.500M5 19h9M7 16v3M11 16v3M14.500 1h5v6h-5zM17 7v12" fill="none" stroke="#fff" stroke-width="1.500"/></svg>
  <svg class="ml-[10px] w-[20px] h-[18px]" viewBox="0 0 20 18"><path d="M1 6.500h3L9 2v14l-5-4.500H1zM11.500 6q2 3 0 6M14 4q3.500 5 0 10M16.500 2q5 7 0 14" fill="none" stroke="#fff" stroke-width="1.300"/></svg>
  <svg class="ml-[10px] w-[20px] h-[18px]" viewBox="0 0 20 18"><rect x="2" y="5" width="15" height="11" rx="2" fill="none" stroke="#fff" stroke-width="1.500"/><path d="M6 7h9v7H4v-3zM18 8h2v5h-2z" fill="#fff"/><path d="M4 0L0 7h3l-1 5 5-7H4z" fill="#fff" stroke="#28201c" stroke-width=".6"/></svg>
  <div class="w-[91px] text-right whitespace-nowrap">12:01 PM<br>11/15/2022</div>
  <span class="ml-[14px] size-5 rounded-full bg-[#4cc2ff] text-[#111] text-[12px] text-center">1</span>
</div>

<script>
const palette = [['button','Button'],['check','CheckBox'],['date','DatePicker'],['image','Image'],['label','Label'],['list','ListPicker'],['lview','ListView'],['notify','Notifier'],['pass','PasswordTextBox'],['slider','Slider'],['spin','Spinner'],['switch','Switch'],['text','TextBox'],['time','TimePicker'],['webv','WebViewer']];
document.getElementById('palette').innerHTML = palette.map(([i, n]) =>
  `<div class="h-[43.43px] pl-[17px] pr-[19px] flex items-center"><svg class="size-[21px]"><use href="#i-${i}"/></svg><span class="ml-[19px] pb-[1px]">${n}</span><svg class="ml-auto mb-[1px] size-[15px]"><use href="#help"/></svg></div>`).join('');

const tree = [['screen','Screen1',0,1],['horiz','HorizontalArrangement3',1,1],['button','Button1',2,0],['horiz','HorizontalArrangement4',1,1],['button','Button2',2,0],['horiz','HorizontalArrangement5',1,1],['button','Button3',2,0],['web','Web1',1,0],['clock','Clock1',1,0],['web','Web2',1,0]];
const pad = ['pl-[17px]', 'pl-[38px]', 'pl-[60px]'];
document.getElementById('tree').innerHTML = tree.map(([i, n, d, open], k) =>
  `<div class="h-[35px] flex items-start ${pad[d]}">
    <span class="w-[12px] pt-[10px] shrink-0">${open ? '<svg class="size-3"><use href="#minus"/></svg>' : ''}</span>
    <div class="h-[35px] flex items-start ${d === 0 ? 'ml-[8px] pl-[8px] pr-[6px] bg-[#d2e0a6]' : k > 6 ? 'ml-[17px] pt-px' : 'ml-[16px]'}">
    <svg class="mt-[4px] size-[21px] shrink-0"><use href="#i-${i}"/></svg><span class="ml-[3px] mt-[13px]">${n}</span></div></div>`).join('');
</script>
</body>
</html>
